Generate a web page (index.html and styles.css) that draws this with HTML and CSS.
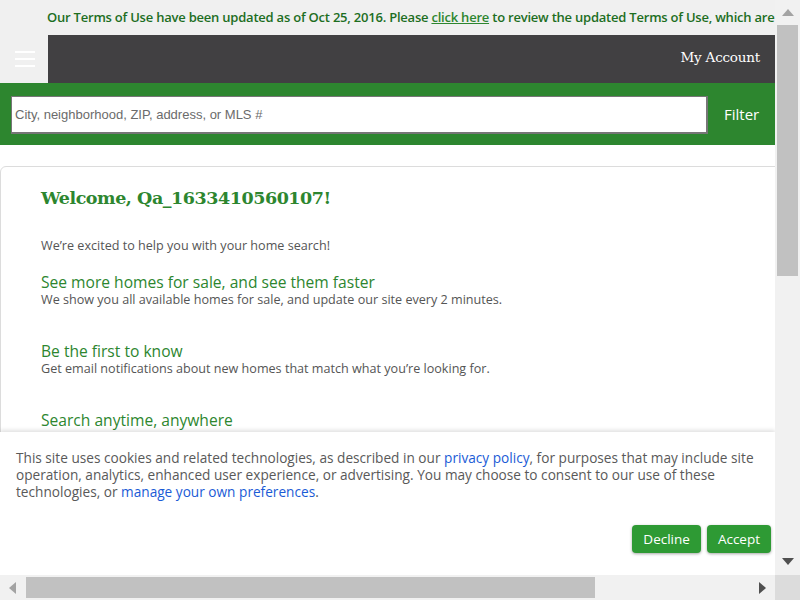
FILE: index.html
```html
<!DOCTYPE html>
<html>
<head>
<meta charset="utf-8">
<link rel="stylesheet" href="styles.css">
</head>
<body>
<div class="viewport">
  <div class="page">
    <div class="terms">Our Terms of Use have been updated as of Oct 25, 2016. Please <a href="#">click here</a> to review the updated Terms of Use, which are effective immediately.</div>
    <div class="header">
      <div class="menu">
        <span></span><span></span><span></span>
      </div>
      <div class="bar"><a class="account" href="#">My Account</a></div>
    </div>
    <div class="search">
      <input class="search-input" type="text" placeholder="City, neighborhood, ZIP, address, or MLS #">
      <span class="filter">Filter</span>
    </div>
    <div class="content">
      <div class="card">
        <h1 class="welcome">Welcome, Qa_1633410560107!</h1>
        <p class="intro">We’re excited to help you with your home search!</p>
        <div class="feature">
          <h2>See more homes for sale, and see them faster</h2>
          <p>We show you all available homes for sale, and update our site every 2 minutes.</p>
        </div>
        <div class="feature">
          <h2>Be the first to know</h2>
          <p>Get email notifications about new homes that match what you’re looking for.</p>
        </div>
        <div class="feature">
          <h2>Search anytime, anywhere</h2>
          <p>Search from your phone or tablet with the Redfin® app, available for iPhone, iPad and Android.</p>
        </div>
      </div>
    </div>
    <div class="cookie">
      <p>This site uses cookies and related technologies, as described in our <a href="#">privacy policy</a>, for purposes that may include site operation, analytics, enhanced user experience, or advertising. You may choose to consent to our use of these technologies, or <a href="#">manage your own preferences</a>.</p>
      <div class="actions">
        <button class="btn">Decline</button>
        <button class="btn">Accept</button>
      </div>
    </div>
  </div>
  <div class="vscroll">
    <span class="arrow up"></span>
    <div class="vtrack"><div class="vthumb"></div></div>
    <span class="arrow down"></span>
  </div>
  <div class="hscroll">
    <span class="arrow left"></span>
    <div class="htrack"><div class="hthumb"></div></div>
    <span class="arrow right"></span>
  </div>
  <div class="corner"></div>
</div>
</body>
</html>
```

FILE: styles.css
```css
html, body {
  margin: 0;
  padding: 0;
  width: 800px;
  height: 600px;
  overflow: hidden;
  background: #fff;
}

.viewport {
  display: grid;
  grid-template-columns: 775px 25px;
  grid-template-rows: 575px 25px;
  width: 800px;
  height: 600px;
}

.page {
  position: relative;
  overflow: hidden;
  background: #fff;
  font-family: "Open Sans", sans-serif;
}

.terms {
  height: 35px;
  line-height: 35px;
  background: #f0f0f0;
  padding-left: 47px;
  white-space: nowrap;
  overflow: hidden;
  color: #1d6e1f;
  font-family: "Open Sans", sans-serif;
  font-weight: 600;
  font-size: 13px;
  letter-spacing: -0.22px;
}

.terms a {
  color: #2d862f;
  text-decoration: underline;
}

.header {
  display: flex;
  height: 48px;
}

.menu {
  width: 48px;
  background: #f0f0f0;
  display: flex;
  flex-direction: column;
  justify-content: center;
  gap: 5.5px;
  padding-left: 15px;
  box-sizing: border-box;
}

.menu span {
  display: block;
  width: 20px;
  height: 1.5px;
  background: #fff;
}

.bar {
  flex: 1;
  background: #414042;
  display: flex;
  align-items: center;
  justify-content: flex-end;
  padding-right: 15px;
}

.account {
  color: #fff;
  text-decoration: none;
  font-family: "DejaVu Serif", serif;
  font-size: 13.5px;
  letter-spacing: -0.2px;
  margin-top: -4px;
}

.search {
  display: flex;
  align-items: center;
  height: 62px;
  background: #2d862f;
  padding-left: 11px;
  box-sizing: border-box;
}

.search-input {
  width: 697px;
  height: 38px;
  box-sizing: border-box;
  border: 1px solid #767676;
  border-width: 1px 2px 2px 1px;
  margin: 1px 0 0 0;
  padding: 1px 0 0 3px;
  font-family: "Liberation Sans", Arial, sans-serif;
  font-size: 13px;
  background: #fff;
}

.search-input::placeholder {
  color: #6b6b6b;
}

.filter {
  color: #fff;
  font-family: "Open Sans", sans-serif;
  font-size: 15px;
  margin-left: 16px;
}

.content {
  padding-top: 21px;
}

.card {
  width: 900px;
  border: 1px solid #dcdcdc;
  border-top-left-radius: 6px;
  padding: 19px 0 40px 40px;
  min-height: 400px;
}

.welcome {
  margin: 0;
  color: #2d862f;
  font-family: "DejaVu Serif", serif;
  font-size: 17.5px;
  font-weight: bold;
  letter-spacing: -0.45px;
  line-height: 24px;
}

.intro {
  margin: 27px 0 0 0;
  font-size: 12.6px;
  color: #555;
  line-height: 17px;
}

.feature {
  margin-top: 19px;
}

.feature + .feature {
  margin-top: 34px;
}

.feature h2 {
  margin: 0;
  font-weight: normal;
  font-size: 15.6px;
  color: #2d862f;
  line-height: 18px;
}

.feature p {
  margin: 0;
  font-size: 12.6px;
  color: #555;
  line-height: 17px;
}

.cookie {
  position: absolute;
  left: 0;
  right: 0;
  bottom: 0;
  height: 143px;
  background: #fff;
  box-shadow: 0 -2px 4px rgba(0, 0, 0, 0.12);
  padding: 17px 16px 0 16px;
  box-sizing: border-box;
}

.cookie p {
  margin: 0;
  font-size: 13.65px;
  line-height: 17px;
  color: #595959;
}

.cookie a {
  color: #1a5bd6;
  text-decoration: none;
}

.actions {
  display: flex;
  justify-content: flex-end;
  gap: 6px;
  margin-top: 25px;
  margin-right: -12px;
}

.btn {
  height: 28px;
  padding: 0 11px;
  border: none;
  border-radius: 4px;
  background: #2e9a34;
  color: #fff;
  font-family: "Open Sans", sans-serif;
  font-size: 13.5px;
  box-shadow: 0 1px 3px rgba(0, 0, 0, 0.35);
}

.vscroll {
  background: #f1f1f1;
  display: flex;
  flex-direction: column;
  align-items: center;
}

.vtrack {
  flex: 1;
  width: 100%;
  padding: 0 2px;
  box-sizing: border-box;
}

.vthumb {
  height: 251px;
  background: #c1c1c1;
}

.hscroll {
  background: #f1f1f1;
  display: flex;
  align-items: center;
}

.htrack {
  flex: 1;
  height: 100%;
  padding: 2px 0;
  box-sizing: border-box;
}

.hthumb {
  width: 569px;
  height: 100%;
  background: #c1c1c1;
}

.corner {
  background: #dcdcdc;
}

.arrow {
  display: block;
  width: 0;
  height: 0;
  flex: none;
}

.arrow.up {
  margin: 9px 0 9px;
  border-left: 6px solid transparent;
  border-right: 6px solid transparent;
  border-bottom: 7px solid #a3a3a3;
}

.arrow.down {
  margin: 9px 0 10px;
  border-left: 6px solid transparent;
  border-right: 6px solid transparent;
  border-top: 7px solid #505050;
}

.arrow.left {
  margin: 0 10px 0 9px;
  border-top: 6px solid transparent;
  border-bottom: 6px solid transparent;
  border-right: 7px solid #a3a3a3;
}

.arrow.right {
  margin: 0 9px 0 9px;
  border-top: 6px solid transparent;
  border-bottom: 6px solid transparent;
  border-left: 7px solid #505050;
}
```
